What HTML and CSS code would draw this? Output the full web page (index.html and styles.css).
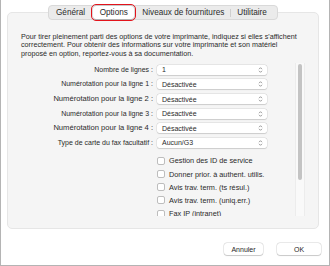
FILE: index.html
```html
<!DOCTYPE html>
<html lang="fr">
<head>
<meta charset="utf-8">
<link rel="stylesheet" href="styles.css">
</head>
<body>
<div class="window">
  <div class="tabs">
    <div class="tab">Général</div>
    <div class="tab selected">Options</div>
    <div class="tab">Niveaux de fournitures</div>
    <div class="sep"></div>
    <div class="tab">Utilitaire</div>
  </div>
  <div class="panel">
    <p class="intro">Pour tirer pleinement parti des options de votre imprimante, indiquez si elles s'affichent<br>correctement. Pour obtenir des informations sur votre imprimante et son matériel<br>proposé en option, reportez-vous à sa documentation.</p>
    <div class="scroll">
      <div class="content">
        <div class="form">
          <label class="label">Nombre de lignes :</label>
          <div class="select"><span>1</span><svg class="chev" viewBox="0 0 5 8"><path d="M1 3.2L2.5 1.7L4 3.2M1 4.8L2.5 6.3L4 4.8"/></svg></div>
          <label class="label">Numérotation pour la ligne 1 :</label>
          <div class="select"><span>Désactivée</span><svg class="chev" viewBox="0 0 5 8"><path d="M1 3.2L2.5 1.7L4 3.2M1 4.8L2.5 6.3L4 4.8"/></svg></div>
          <label class="label big">Numérotation pour la ligne 2 :</label>
          <div class="select"><span>Désactivée</span><svg class="chev" viewBox="0 0 5 8"><path d="M1 3.2L2.5 1.7L4 3.2M1 4.8L2.5 6.3L4 4.8"/></svg></div>
          <label class="label">Numérotation pour la ligne 3 :</label>
          <div class="select"><span>Désactivée</span><svg class="chev" viewBox="0 0 5 8"><path d="M1 3.2L2.5 1.7L4 3.2M1 4.8L2.5 6.3L4 4.8"/></svg></div>
          <label class="label big">Numérotation pour la ligne 4 :</label>
          <div class="select"><span>Désactivée</span><svg class="chev" viewBox="0 0 5 8"><path d="M1 3.2L2.5 1.7L4 3.2M1 4.8L2.5 6.3L4 4.8"/></svg></div>
          <label class="label">Type de carte du fax facultatif :</label>
          <div class="select"><span>Aucun/G3</span><svg class="chev" viewBox="0 0 5 8"><path d="M1 3.2L2.5 1.7L4 3.2M1 4.8L2.5 6.3L4 4.8"/></svg></div>
        </div>
        <ul class="checks">
          <li><span class="box"></span>Gestion des ID de service</li>
          <li><span class="box"></span>Donner prior. à authent. utilis.</li>
          <li><span class="box"></span>Avis trav. term. (ts résul.)</li>
          <li><span class="box"></span>Avis trav. term. (uniq.err.)</li>
          <li><span class="box"></span>Fax IP (intranet)</li>
        </ul>
      </div>
      <div class="scrollbar"><div class="thumb"></div></div>
    </div>
  </div>
  <div class="buttons">
    <button class="btn cancel">Annuler</button>
    <button class="btn ok">OK</button>
  </div>
</div>
</body>
</html>
```
FILE: styles.css
```css
* { box-sizing: border-box; }
html, body { margin: 0; padding: 0; }
body {
  width: 330px;
  height: 266px;
  background: #ffffff;
  font-family: "Liberation Sans", Arial, sans-serif;
  color: #262626;
  overflow: hidden;
}
.window {
  width: 330px;
  height: 266px;
  border-left: 1px solid #b4b4b4;
  border-right: 1px solid #b4b4b4;
  border-bottom: 1px solid #b4b4b4;
  display: flex;
  flex-direction: column;
}
.tabs {
  position: relative;
  z-index: 1;
  display: flex;
  align-items: center;
  align-self: flex-start;
  margin: 5px 0 0 47px;
  height: 15px;
  padding: 0 4px 0 1px;
  background: #ebebeb;
  border: 0.5px solid #d9d9d9;
  border-radius: 4px;
}
.tab {
  font-size: 8.2px;
  line-height: 13px;
  padding: 0 6px;
  color: #2b2b2b;
  white-space: nowrap;
}
.tab.selected {
  background: #ffffff;
  border-radius: 3px;
  margin: 0 2px;
  padding: 0 6.5px;
  box-shadow: 0 0 0 0.5px rgba(0,0,0,0.12), 0 0.5px 1px rgba(0,0,0,0.15);
  outline: 1.5px solid #e3131b;
  outline-offset: 1px;
}
.sep {
  width: 1px;
  height: 8px;
  background: #cfcfcf;
}
.panel {
  margin: -8px 0 0 6px;
  width: 312px;
  height: 217px;
  background: #f5f5f5;
  border: 1px solid #e6e6e6;
  border-radius: 5px;
  padding: 20px 12px 12px 0;
  display: flex;
  flex-direction: column;
}
.intro {
  margin: 0 0 0 13px;
  font-size: 7.2px;
  line-height: 8.3px;
  color: #2a2a2a;
  white-space: nowrap;
}
.scroll {
  margin-top: 5px;
  flex: 1;
  display: flex;
  overflow: hidden;
}
.content {
  flex: 1;
  overflow: hidden;
  padding-top: 2px;
}
.form {
  display: grid;
  grid-template-columns: 145px 110px;
  column-gap: 4px;
  row-gap: 4.6px;
  align-items: center;
}
.label {
  text-align: right;
  font-size: 7px;
  line-height: 10px;
  white-space: nowrap;
  color: #2a2a2a;
}
.label.big { font-size: 7.6px; }
.select {
  height: 10px;
  background: #ffffff;
  border-radius: 2.5px;
  box-shadow: 0 0 0 0.5px rgba(0,0,0,0.1), 0 0.5px 1px rgba(0,0,0,0.12);
  display: flex;
  align-items: center;
  justify-content: space-between;
  padding: 0 4px 0 5px;
  font-size: 7px;
  color: #2a2a2a;
}
.chev {
  width: 5px;
  height: 8px;
  fill: none;
  stroke: #6b6b6b;
  stroke-width: 0.7;
}
.checks {
  list-style: none;
  margin: 8px 0 0 149px;
  padding: 0;
  display: flex;
  flex-direction: column;
  gap: 3.2px;
}
.checks li {
  display: flex;
  align-items: center;
  height: 10px;
  font-size: 7.3px;
  color: #2a2a2a;
  white-space: nowrap;
}
.box {
  width: 8px;
  height: 8px;
  background: #ffffff;
  border: 0.5px solid #bdbdbd;
  border-radius: 2px;
  margin-right: 4px;
  flex: none;
}
.scrollbar {
  width: 10px;
  margin-right: 1px;
  background: #f9f9f9;
  border-left: 0.5px solid #ececec;
  border-right: 0.5px solid #ececec;
  padding: 1px 2px 0;
}
.thumb {
  height: 116px;
  background: #c3c3c3;
  border-radius: 3px;
}
.buttons {
  display: flex;
  justify-content: flex-end;
  gap: 14px;
  margin-top: 14px;
  padding-right: 8px;
}
.btn {
  height: 12px;
  padding: 0;
  font-family: "Liberation Sans", Arial, sans-serif;
  font-size: 7px;
  color: #262626;
  background: #ffffff;
  border: none;
  border-radius: 3px;
  box-shadow: 0 0 0 0.5px rgba(0,0,0,0.15), 0 0.5px 1px rgba(0,0,0,0.15);
}
.cancel { width: 39px; }
.ok { width: 44px; }
```
